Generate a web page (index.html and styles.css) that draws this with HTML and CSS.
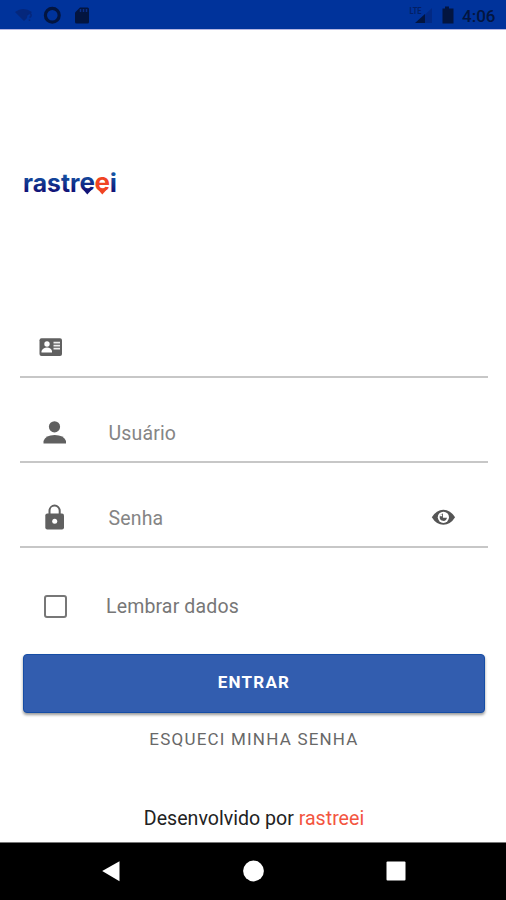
FILE: index.html
```html
<!DOCTYPE html>
<html lang="pt-BR">
<head>
<meta charset="utf-8">
<title>rastreei</title>
<link rel="stylesheet" href="styles.css">
</head>
<body>
<div class="screen">
  <header class="status">
    <svg class="status-left" width="120" height="29" viewBox="0 0 120 29">
      <path d="M15 12Q23 6 32 12L30 14Q27 14 27 18L24 21Z" fill="#05277c"/>
      <path d="M27.500 14.500Q29 12.500 30.800 14Q32 16 29.500 17.500M29.500 19.500V21" fill="none" stroke="#05277c" stroke-width="1.500"/>
      <circle cx="52.300" cy="15.200" r="6.900" fill="none" stroke="#031540" stroke-width="3.200"/>
      <path d="M80 7.500H87.500Q89 7.500 89 9V22Q89 23.500 87.500 23.500H76.500Q75 23.500 75 22V12.500Z" fill="#031540"/>
      <path d="M80.500 9V12M83.500 9V12M86.500 9V12" stroke="#0b2f86" stroke-width="1.500"/>
    </svg>
    <div class="status-right">
      <svg width="50" height="29" viewBox="0 0 50 29">
        <path d="M16 23L32 8V23Z" fill="#022984"/>
        <path d="M15 23L25 14V23Z" fill="#031540"/>
        <text x="9.500" y="14" class="lte" textLength="12" lengthAdjust="spacingAndGlyphs">LTE</text>
        <path d="M42.500 8.500H45V6.500H49V8.500H50V23.500H42.500Z" fill="#031540"/>
      </svg><svg width="5" height="29" viewBox="0 0 5 29"><path d="M0 8.500H3.500V23.500H0Z" fill="#031540"/></svg>
      <span class="clock">4:06</span>
    </div>
  </header>
  <main class="login">
    <svg class="logo" width="96" height="32" viewBox="0 0 96 32" role="img" aria-label="rastreei">
      <defs><linearGradient id="brand" x1="0" y1="0" x2="0" y2="1"><stop offset=".25" stop-color="#1453a4"/><stop offset=".8" stop-color="#111477"/></linearGradient></defs>
      <text x="2" y="21.500" class="brand-blue" textLength="57" lengthAdjust="spacingAndGlyphs">rastr</text>
      <text x="58.500" y="20.500" class="brand-blue" textLength="15.500" lengthAdjust="spacingAndGlyphs">e</text>
      <text x="73.500" y="20.500" class="brand-red" textLength="15.500" lengthAdjust="spacingAndGlyphs">e</text>
      <text x="88.800" y="21.500" class="brand-blue" textLength="7.200" lengthAdjust="spacingAndGlyphs">i</text>
      <path d="M62 19.500L66.300 24.500L70.800 19.500Z" fill="#111477"/>
      <path d="M77 19.500L81.300 24.500L85.800 19.500Z" fill="#f04423"/>
    </svg>
    <form class="form">
      <div class="field">
        <svg class="icon icon-card" width="30" height="30" viewBox="0 0 30 30">
          <rect x="3.500" y="6.300" width="22.500" height="17.700" rx="2" fill="#606060"/>
          <circle cx="11" cy="12" r="2.700" fill="#fff"/>
          <path d="M5.500 20.500V19Q7 15.500 11 15.500Q15 15.500 16 19V20.500Z" fill="#fff"/>
          <path d="M17.500 10.700H24M17.500 13.700H24M17.500 16.700H24" stroke="#eee" stroke-width="1.700"/>
        </svg>
      </div>
      <div class="field">
        <svg class="icon" width="30" height="30" viewBox="0 0 30 30" fill="#606060">
          <circle cx="15.500" cy="9.800" r="5.600"/>
          <path d="M4.500 26.500V24Q6.500 18 15.600 18Q25 18 27 24V26.500Z"/>
        </svg>
        <span class="label">Usuário</span>
      </div>
      <div class="field">
        <svg class="icon" width="30" height="30" viewBox="0 0 30 30">
          <path d="M10.500 12V8.700A5.100 5.100 0 0 1 20.700 8.700V12" fill="none" stroke="#606060" stroke-width="2"/>
          <rect x="6.300" y="11.500" width="18.700" height="16" rx="2" fill="#606060"/>
          <circle cx="15.700" cy="19.300" r="2.500" fill="#fff"/>
        </svg>
        <span class="label">Senha</span>
        <svg class="eye" width="30" height="30" viewBox="0 0 30 30">
          <path d="M3.800 15.300Q8.400 7.700 15.400 7.700Q22.400 7.700 27.100 15.300Q22.400 22.800 15.400 22.800Q8.400 22.800 3.800 15.300Z" fill="#555"/>
          <circle cx="15.400" cy="15.300" r="5.600" fill="#fff"/>
          <path d="M14.900 11.500V15.800H19A3.700 3.700 0 1 1 14.900 11.500Z" fill="#555"/>
          <circle cx="13.100" cy="13.300" r="1.100" fill="#fff"/>
        </svg>
      </div>
      <div class="remember"><span class="box"></span><span>Lembrar dados</span></div>
      <button class="enter" type="button">ENTRAR</button>
      <a class="forgot">ESQUECI MINHA SENHA</a>
    </form>
    <footer class="credit">Desenvolvido por <span>rastreei</span></footer>
  </main>
  <nav class="navbar">
    <svg width="24" height="24" viewBox="0 0 24 24"><path d="M3.200 12L20.500 2.300V22.200Z" fill="#fff"/></svg>
    <svg width="24" height="24" viewBox="0 0 24 24"><circle cx="12.500" cy="12" r="10.400" fill="#fff"/></svg>
    <svg width="24" height="24" viewBox="0 0 24 24"><rect x="2.500" y="2.500" width="19" height="19" rx="1" fill="#fff"/></svg>
  </nav>
</div>
</body>
</html>
```
FILE: styles.css
```css
* { box-sizing: border-box; }
body { margin: 0; background: #fff; font-family: Roboto, "Liberation Sans", sans-serif; }
.screen { width: 506px; height: 900px; display: flex; flex-direction: column; overflow: hidden; }
.status { height: 30px; flex: none; display: flex; justify-content: space-between; background: #00339b; border-bottom: 1px solid #b5b6e2; }
.status-right { display: flex; padding-right: 9px; }
.clock { width: 35px; margin-left: 7px; line-height: 32px; font-size: 17px; font-weight: 500; color: #031540; white-space: nowrap; }
.lte { font: 700 9px Roboto, sans-serif; fill: #031f65; }
.login { flex: 1; display: flex; flex-direction: column; padding: 140px 18px 0 20px; }
.logo { display: block; margin-left: 1px; overflow: visible; }
.brand-blue, .brand-red { font: 700 24.5px Inter, sans-serif; fill: url(#brand); }
.brand-red { fill: #f04423; }
.form { display: flex; flex-direction: column; margin-top: 91px; }
.field { height: 85px; display: flex; align-items: flex-end; border-bottom: 2px solid #c7c7c7; padding: 0 30px 14px 19px; }
.icon { flex: none; }
.icon-card { margin-left: -3px; }
.label { margin: 0 0 -1.5px 39.5px; line-height: 30px; font-size: 19.5px; letter-spacing: .15px; color: #858585; }
.eye { margin-left: auto; }
.remember { height: 36px; margin-top: 40px; display: flex; align-items: center; padding-left: 24px; font-size: 19.5px; letter-spacing: .15px; color: #777; }
.box { width: 23px; height: 23px; border: 2px solid #777; border-radius: 3px; margin-right: 39px; }
.enter { height: 59px; margin: 30px 3px 0; padding: 0 0 4px; border: 1px solid #164da5; border-radius: 4px; background: #325daf; box-shadow: 0 2px 3px #0006; color: #fff; font: 700 17px Roboto, sans-serif; letter-spacing: 1.2px; }
.forgot { margin-top: 15px; line-height: 22px; text-align: center; font-size: 17px; letter-spacing: 1.2px; color: #686868; }
.credit { margin: auto 0 11px; line-height: 24px; text-align: center; font-size: 19.6px; color: #222; }
.credit span { color: #f35540; }
.navbar { height: 58px; flex: none; display: flex; align-items: center; justify-content: center; gap: 118.5px; padding-bottom: 2px; background: #000; border-top: 1px solid #777; }
```
